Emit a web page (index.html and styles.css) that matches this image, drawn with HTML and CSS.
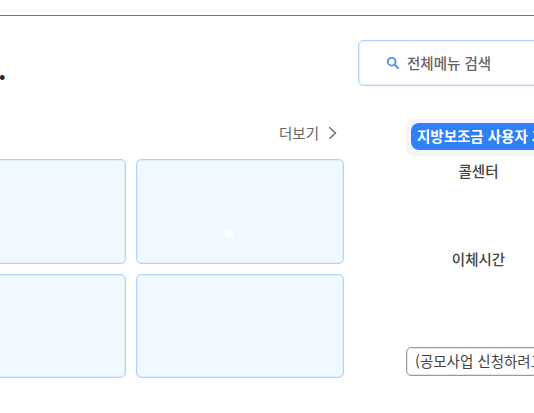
FILE: index.html
```html
<!DOCTYPE html>
<html lang="ko">
<head>
<meta charset="utf-8">
<title>전체메뉴</title>
<link rel="stylesheet" href="styles.css">
</head>
<body>
<div class="page">
  <header class="topbar"></header>
  <div class="content">
    <main class="main">
      <div class="title-row"><span class="title">.</span></div>
      <div class="more-row">
        <a class="more">더보기
          <svg class="chev" width="9" height="14" viewBox="0 0 9 14"><path d="M1.2 1.2 7.6 7 1.2 12.8" fill="none" stroke="#666" stroke-width="1.3"/></svg>
        </a>
      </div>
      <div class="cards">
        <div class="card"></div>
        <div class="card"><span class="dot"></span></div>
        <div class="card"></div>
        <div class="card"></div>
      </div>
    </main>
    <aside class="side">
      <div class="search">
        <svg class="search-icon" width="14" height="14" viewBox="0 0 14 14"><circle cx="5.7" cy="5.7" r="3.9" fill="none" stroke="#4a90f0" stroke-width="1.8"/><path d="M8.6 8.6 12.6 12.6" stroke="#4a90f0" stroke-width="2"/></svg>
        <span class="search-text">전체메뉴 검색</span>
      </div>
      <div class="pill-wrap"><span class="pill">지방보조금 사용자 가이드</span></div>
      <div class="label label-call">콜센터</div>
      <div class="label label-time">이체시간</div>
      <div class="apply"><span>(공모사업 신청하려고 합니다)</span></div>
    </aside>
  </div>
</div>
</body>
</html>
```
FILE: styles.css
```css
* { box-sizing: border-box; }
html, body { margin: 0; padding: 0; background: #fff; }
body { font-family: "Noto Sans CJK KR", "Noto Sans", sans-serif; color: #333; }
.page { width: 534px; height: 413px; overflow: hidden; }
.topbar { height: 16px; border-bottom: 1px solid #777; }
.content { display: flex; }
.main { width: 344px; flex: none; display: flex; flex-direction: column; align-items: flex-end; }
.title-row { height: 88px; width: 100%; overflow: hidden; }
.title { display: block; margin-top: 35px; margin-left: -2px; font-size: 26px; line-height: 36px; font-weight: 700; color: #2b2b2b; }
.more-row { height: 55px; display: flex; align-items: flex-start; padding-right: 7px; }
.more { display: flex; align-items: center; gap: 9px; font-size: 14.5px; line-height: 20px; margin-top: 19px; color: #666; }
.cards { display: grid; grid-template-columns: 208px 208px; grid-template-rows: 105px 104px; gap: 10px; flex: none; }
.card { background: #f0f9ff; border: 1px solid #acd6ff; box-shadow: inset 0 0 0 1px #dceeff; border-radius: 5px; position: relative; }
.dot { width: 8px; height: 8px; background: #fff; position: absolute; left: 88px; top: 69px; }
.side { width: 176px; flex: none; margin-left: 14px; display: flex; flex-direction: column; white-space: nowrap; }
.search { width: 230px; height: 46px; margin-top: 24px; border: 1px solid #acd6ff; box-shadow: inset 0 0 0 1px #e2f0ff; border-radius: 5px; display: flex; align-items: center; padding-left: 27px; gap: 7px; flex: none; }
.search-text { font-size: 14.5px; line-height: 20px; color: #666; font-weight: 500; margin-top: -1px; }
.pill-wrap { margin-top: 33px; margin-left: 48px; width: 200px; height: 37px; background: #f3f5f8; border-radius: 8px; padding: 4px 5px; flex: none; }
.pill { display: block; width: 190px; height: 27px; background: #2f80f6; color: #fff; font-weight: 700; font-size: 14.5px; line-height: 26px; border-radius: 8px; padding-left: 6px; }
.label { font-size: 14.5px; font-weight: 500; color: #444; text-align: center; line-height: 20px; margin-left: 48px; width: 145px; }
.label-call { margin-top: 5px; }
.label-time { margin-top: 68px; }
.apply { margin-top: 78px; margin-left: 48px; width: 200px; height: 29px; border: 1px solid #9299a8; box-shadow: inset 0 0 0 1px #e4e6ea; border-radius: 5px; font-size: 14.5px; line-height: 26px; padding-left: 8px; color: #444; flex: none; }
```
